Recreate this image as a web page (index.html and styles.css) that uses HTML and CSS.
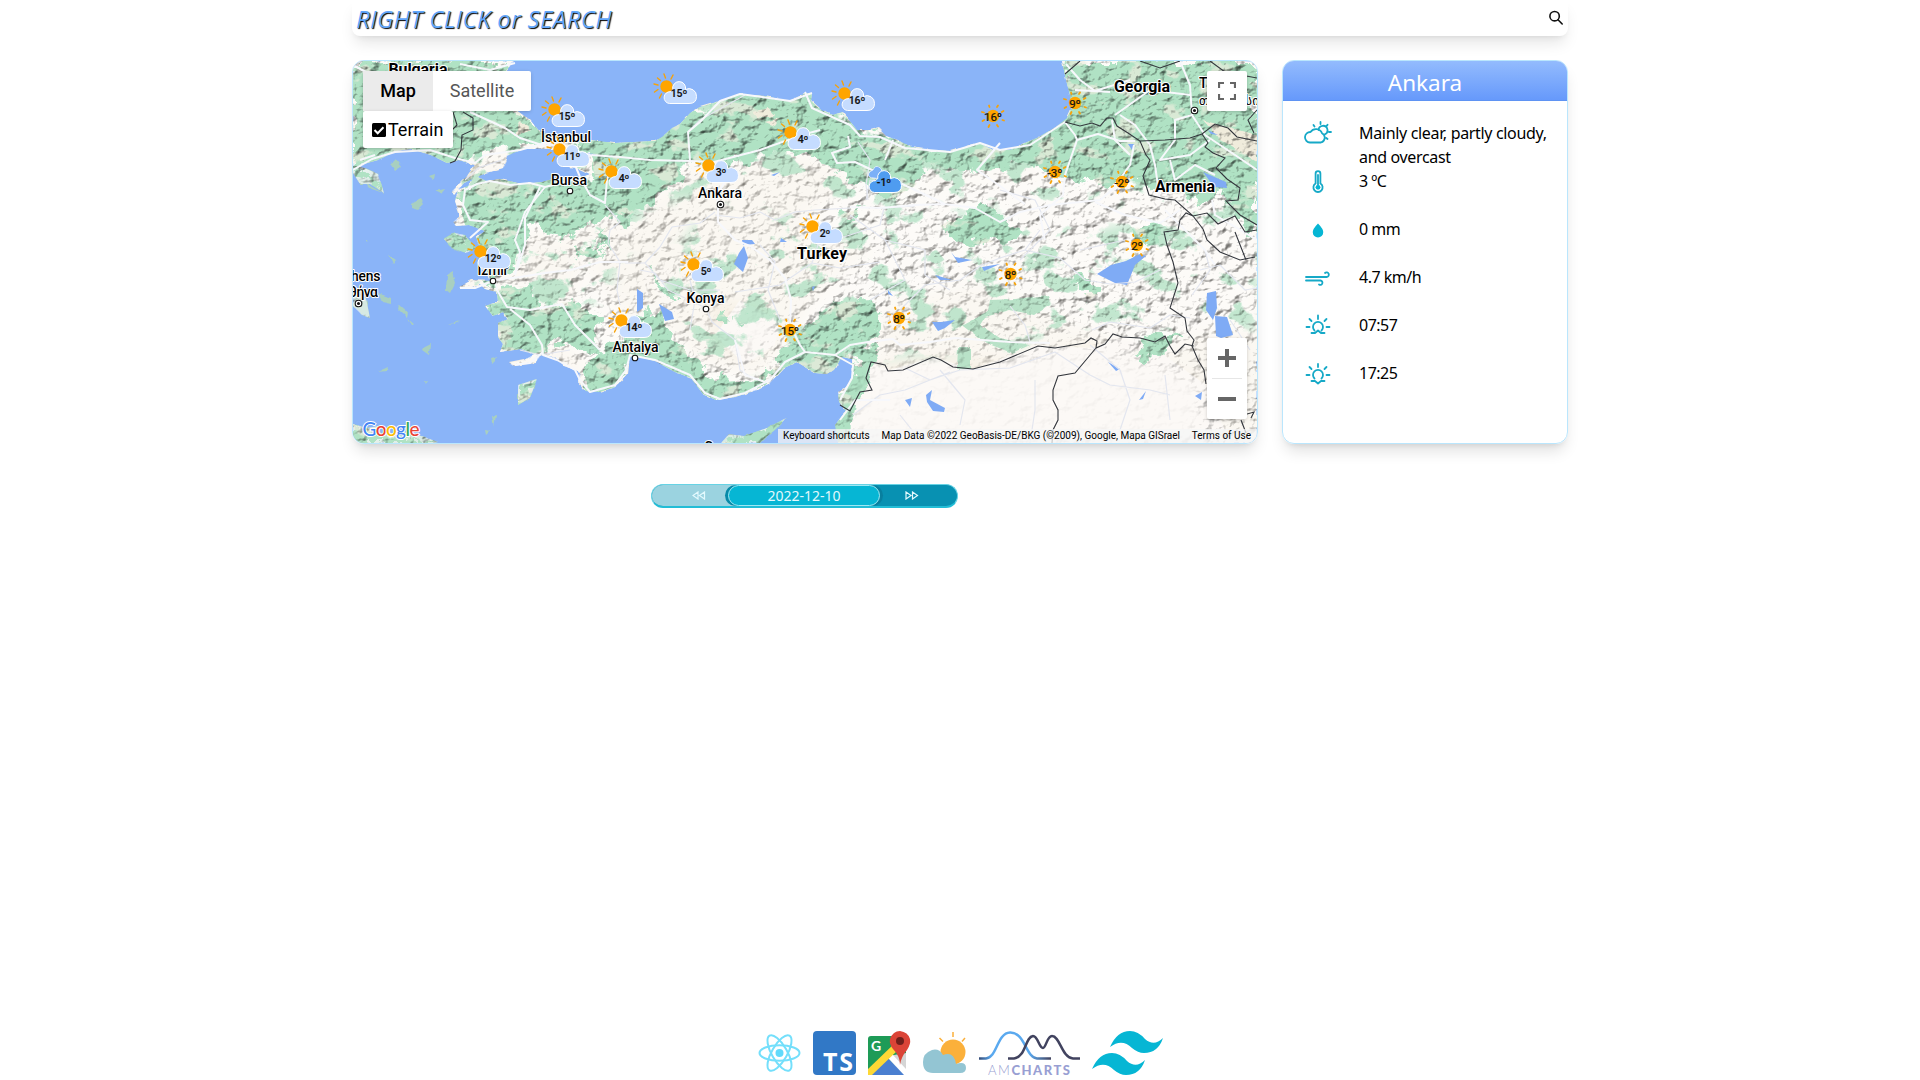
FILE: index.html
```html
<!DOCTYPE html>
<html lang="en">
<head>
<meta charset="utf-8">
<title>Weather Map</title>
<link rel="stylesheet" href="styles.css">
</head>
<body>
<header class="topbar">
  <span class="topbar-title">RIGHT CLICK or SEARCH</span>
  <svg class="search" viewBox="0 0 16 16"><circle cx="6.6" cy="6.2" r="4.7"/><path d="M10 9.800l4.200 4.200"/></svg>
</header>
<main class="content">
  <section class="map">
    <svg class="map-canvas" viewBox="353 61 904 382">
      <defs>
        <filter id="relief" x="0" y="0" width="100%" height="100%" color-interpolation-filters="sRGB">
          <feTurbulence type="fractalNoise" baseFrequency="0.08 0.1" numOctaves="4" seed="8" result="n"/>
          <feColorMatrix in="n" type="matrix" values="0 0 0 0 0  0 0 0 0 0  0 0 0 0 0  1 0 0 0 0"/>
          <feDiffuseLighting surfaceScale="3.600" diffuseConstant="1.360" lighting-color="#fff"><feDistantLight azimuth="225" elevation="52"/></feDiffuseLighting>
        </filter>
        <filter id="woods" x="0" y="0" width="100%" height="100%" color-interpolation-filters="sRGB">
          <feTurbulence type="fractalNoise" baseFrequency="0.03 0.04" numOctaves="5" seed="21"/>
          <feColorMatrix type="matrix" values="0 0 0 0 .67  0 0 0 0 .87  0 0 0 0 .75  0 14 0 0 -8"/>
        </filter>
        <filter id="bare" x="0" y="0" width="100%" height="100%" color-interpolation-filters="sRGB">
          <feTurbulence type="fractalNoise" baseFrequency="0.035 0.05" numOctaves="4" seed="14"/>
          <feColorMatrix type="matrix" values="0 0 0 0 .93  0 0 0 0 .93  0 0 0 0 .87  0 12 0 0 -7.100"/>
        </filter>
        <filter id="rough" x="-5%" y="-5%" width="110%" height="110%">
          <feTurbulence type="fractalNoise" baseFrequency="0.07" numOctaves="4" seed="3"/>
          <feDisplacementMap in="SourceGraphic" scale="24" xChannelSelector="R" yChannelSelector="G"/>
        </filter>
        <filter id="coast"><feTurbulence type="fractalNoise" baseFrequency="0.12" numOctaves="2" seed="5"/><feDisplacementMap in="SourceGraphic" scale="4" xChannelSelector="R" yChannelSelector="G"/></filter>
        <filter id="soft"><feGaussianBlur stdDeviation="7"/></filter>
        <path id="land" d="M353 61H514L505 72 503 92 513 108 530 120 540 132 556 136 572 136 590 140 615 143 634 142 655 141 662 137 672 128 680 124 690 113 700 107 720 101 740 94 765 96 788 101 800 97 805 93 812 93 811 101 821 110 833 115 842 112 848 119 857 130 870 130 878 128 886 136 897 140 912 147 930 150 950 151 965 147 980 143 993 150 1010 150 1025 143 1039 137 1056 127 1067 118 1072 107 1070 95 1066 80 1062 61H1257V443H838L835 425 846 411 839 402 838 392 846 388 853 378 852 359 842 357 834 370 827 374 815 373 797 362 784 368 770 383 757 390 735 397 716 400 703 394 691 378 675 372 655 361 640 357 629 357 627 374 615 387 600 392 586 391 578 382 580 372 564 366 555 357 541 355 535 363 513 366 509 363 524 360 535 354 521 349 500 352 503 344 498 337 498 323 508 319 503 312 493 316 485 306 498 302 497 292 485 289 480 284 465 289 459 287 472 280 491 281 488 273 478 264 481 250 476 238 485 231 469 225 456 226 453 222 460 216 455 201 458 190 468 186 475 176 487 181 500 179 522 184 542 182 560 177 580 179 590 174 577 168 560 166 570 159 600 154 573 153 560 149 541 149 523 149 507 156 503 168 486 173 464 183 454 195 452 191 467 176 475 165 459 160 447 163 431 155 411 149 396 151 378 160 353 167Z"/>
        <g id="islands">
          <path d="M353 286L364 291 367 303 370 318 362 315 353 306ZM518 385L537 379 530 398 518 405ZM353 424L367 428 378 426 381 434 404 432 425 437 438 442 434 443H353ZM721 443L729 434 744 436 767 428 786 418 776 429 765 438 760 443ZM411 204L421 199 424 204 418 210 411 208ZM444 239L454 233 465 235 476 248 466 253 452 248ZM447 275L452 272 455 283 450 293 446 290ZM391 165L396 160 401 167 395 171ZM435 191L445 189 441 194ZM429 176L435 174 434 180ZM389 255L396 260 393 264ZM399 305L408 313 407 318 398 309ZM378 293L391 298 391 304 382 302ZM424 346L430 343 429 355 422 350ZM448 325L460 320 455 324ZM491 358L499 356 492 363ZM378 371L389 366 388 370ZM492 416L496 415 494 428ZM485 430L490 431 486 435ZM365 183L383 193 369 188ZM353 163L378 174 384 193 370 184 360 184 353 173ZM408 319L415 325 412 325ZM425 381L428 382 426 385ZM363 277L368 278 367 282ZM366 239L368 242 366 241Z"/>
        </g>
        <clipPath id="landclip"><use href="#land"/><path d="M353 286L364 291 367 303 370 318 362 315 353 306ZM518 385L537 379 530 398 518 405ZM353 424L367 428 378 426 381 434 404 432 425 437 438 442 434 443H353ZM721 443L729 434 744 436 767 428 786 418 776 429 765 438 760 443ZM444 239L454 233 465 235 476 248 466 253 452 248ZM353 163L378 174 384 193 370 184 360 184 353 173Z"/></clipPath>
        <g id="greens">
          <path d="M353 61H510L490 100 530 115 552 140 535 143 505 148 450 165 353 170Z"/>
          <path d="M558 134L640 140 680 122 735 94 812 92 860 128 930 150 980 143 1062 120 1066 61H1257V235L1240 222 1222 190 1200 205 1180 195 1150 192 1140 175 1100 185 1065 178 1030 163 980 172 930 166 915 186 890 200 860 182 830 163 800 152 760 155 725 167 690 160 680 177 650 200 630 215 600 204 590 150Z"/>
          <path d="M455 195L490 178 585 178 640 190 620 214 585 225 560 240 530 225 515 270 485 285 470 225Z"/>
          <path d="M488 290L530 285 540 310 570 300 600 320 590 345 610 365 585 350 550 340 540 358 500 352Z"/>
          <path d="M580 370L610 345 640 325 650 300 663 330 682 345 690 360 720 378 765 376 795 340 835 303 870 300 880 312 868 345 850 352 852 378 835 405 848 443H836L852 358 828 376 790 362 750 396 710 402 650 365 625 360 616 388 590 394Z"/>
          <path d="M858 347L880 345 868 370 867 390 855 405 846 443H835V395L853 380Z"/>
          <path d="M605 234L608 225 597 240 610 254ZM575 247L598 243 602 258 582 255ZM619 212L632 217 625 230 615 220ZM650 272L660 280 677 292 680 303 663 292ZM840 215L870 205 845 225ZM940 226L975 205 1010 220 1020 238 965 246ZM1133 228L1160 222 1166 240 1145 248ZM1070 275L1086 280 1100 292 1090 300 1078 288ZM1144 338L1180 335 1164 350 1143 359 1132 354ZM716 316L725 314 724 324 714 324ZM732 315L748 318 740 323Z"/>
          <path d="M353 424L381 434 438 442V443H353ZM518 385L537 379 530 398 518 405ZM721 443L744 436 786 418 770 443ZM444 239L476 235V253H444ZM353 163L384 193 353 173Z"/>
        </g>
        <path id="lowland" d="M960 327L988 312 990 300 1015 299 1048 295 1050 305 1035 315 1010 310 985 317 980 325 1000 338 1030 345 1012 353 986 343 960 323ZM958 347L971 347 971 369 957 369ZM797 362L834 357 850 358 830 375 812 375Z"/>
        <mask id="mountains" maskUnits="userSpaceOnUse" x="353" y="61" width="904" height="382">
          <rect x="353" y="61" width="904" height="382" fill="#888"/>
          <g filter="url(#soft)" fill="#ddd"><path d="M850 185L1257 160V330L1200 335 1130 345 1060 320 980 285 900 300 840 340 770 370 820 290 870 250 800 220ZM570 350L580 260 640 330 690 360 760 380 620 390Z" fill="#bbb"/><use href="#greens"/></g>
          <path d="M853 372L935 357 1000 363 1090 345 1110 355 1200 380V443H853ZM710 300L770 310 770 340 740 360 715 340Z" fill="#111" filter="url(#soft)"/>
        </mask>
        <mask id="wooded" maskUnits="userSpaceOnUse" x="353" y="61" width="904" height="382">
          <path d="M353 61H1257V330L1100 330 950 350 840 360 700 370 660 280 700 220 900 205 1100 230 1200 205 650 200 600 300 450 350Z" fill="#bbb" filter="url(#soft)"/>
        </mask>
        <mask id="thin" maskUnits="userSpaceOnUse" x="353" y="61" width="904" height="382"><g fill="#aaa"><use href="#greens"/></g></mask>
        <symbol id="partly" overflow="visible"><g transform="translate(-12.500 -6.500)"><path class="ray" d="M-1-8.500L-2.500-12.500M4.500-7.500L6.500-11.500M-6-6L-9-8.500M-8.500-1.500L-12.500-2.500M-8.500 3L-12 5.500M-5 7.500L-7 11.500"/><circle class="sun" r="6.200"/></g>
          <path class="cloud" d="M-9.500 10.500A5.900 5.900 0 0 1-8.500-1.300Q-7.500-2.500-6.200-3.500A6.500 6.500 0 1 1 6.500-3.500 7.500 7.500 0 0 1 17.500 3.500Q17.500 10.500 10 10.500Z"/></symbol>
        <symbol id="cloudy" overflow="visible"><path class="cloud-back" d="M-10-4Q-16-4-15.500-8-14.500-11-11-12-9-17-5-15-2-14-2-9L-3-3Z"/><path class="cloud-front" d="M-9.500 10.500A5.900 5.900 0 0 1-8.500-1.300Q-7.500-2.500-6.200-3.500A6.500 6.500 0 1 1 6.500-3.500 7.500 7.500 0 0 1 17.500 3.500Q17.500 10.500 10 10.500Z"/></symbol>
        <symbol id="clear" overflow="visible"><circle class="sun" r="6.200"/><path class="ray dots" d="M-3.500-9L-4-10.500M4-9L5-10.500M8.800-4L10.500-5M9.500 4L11 4.500M4 9L5 10.500M-3.500 9L-4.500 11M-8.800 4L-10.500 5M-9-3.500L-11-4"/></symbol>
      </defs>
      <rect class="sea" x="353" y="61" width="904" height="382"/>
      <g class="land" filter="url(#coast)"><use href="#land"/></g>
      <use class="isle" href="#islands" filter="url(#coast)"/>
      <g clip-path="url(#landclip)">
        <path class="plain" d="M853 372L871 362 890 370 933 357 973 369 1038 346 1096 348 1113 338 1150 345 1206 385 1230 443H845ZM740 300L780 320 775 345 745 365 715 335Z"/>
        <g mask="url(#wooded)"><rect x="353" y="61" width="904" height="382" filter="url(#woods)"/></g>
        <g class="green" filter="url(#rough)"><use href="#greens"/></g>
        <use class="lowland" href="#lowland" filter="url(#coast)"/>
        <g mask="url(#thin)"><rect x="353" y="61" width="904" height="382" filter="url(#bare)"/></g>
        <path class="patch" d="M520 120L532 130 515 136ZM752 112L768 108 775 116 757 118ZM765 122L780 118 775 126ZM455 165L480 163 470 180ZM1203 120L1257 135V162L1220 140Z" filter="url(#coast)"/>
        <rect class="shade" x="353" y="61" width="904" height="382" filter="url(#relief)" mask="url(#mountains)"/>
      </g>
      <g class="water">
        <path d="M739 253L744 246 748 258 743 272 734 264ZM742 240L752 240 755 244 743 245ZM637 289L643 293 643 308 637 312ZM659 304L672 312 674 319 665 321ZM1097 274L1111 265 1126 261 1140 254 1146 256 1135 265 1127 285 1115 283ZM1207 293L1216 291 1217 308 1213 320 1206 310ZM1215 316L1227 317 1233 335 1221 338 1216 336ZM1203 172L1226 182 1227 188 1214 187ZM926 395L932 390 930 400 945 408 944 412 933 411 927 402ZM905 400L912 398 910 407ZM951 252L955 257 972 260 958 263ZM932 322L941 322 955 320 945 328 938 331ZM982 267L1000 264 984 271ZM935 275L952 280 940 280ZM1108 362L1120 369 1116 371ZM1195 396L1202 392 1201 400ZM1139 400L1146 391 1143 399ZM771 175L780 172 774 176ZM888 290L893 296 888 294ZM1128 144L1134 144 1132 150ZM781 238L787 242 780 242ZM815 286L813 291 812 287ZM1208 130L1218 135 1211 134Z"/>
      </g>
      <g class="road minor">
        <path d="M605 205L620 222 610 230 608 243 620 262 617 290 620 305M625 263L645 263 660 247 672 227 700 223 715 212M715 215L740 218 760 212 775 220 795 212 815 210 850 208M645 263L660 280 690 290 720 290M640 270L655 273 668 290 706 308 712 322 735 340 740 370 752 378M735 292L780 285 812 263 840 268 880 262M760 245L775 262 768 290 780 320M850 215L885 240 895 260 905 280 870 300M812 263L818 245 850 235 880 225 884 208 915 206M885 240L905 245 925 250 925 275 950 290M858 142L870 160 866 185 868 200M884 182L870 180 866 200M1040 230L1025 250 1000 258 980 266 960 280 925 285 900 310M1025 250L1060 258 1085 280 1110 284 1135 282 1160 270M1010 306L1025 325 1030 342M940 370L965 400 960 425M905 368L930 380 960 370 1010 368 1055 352 1090 375 1110 385 1150 390 1170 395M1035 380L1035 410 1030 443M853 415L880 395 905 390 950 372M1090 345L1120 370 1130 400 1120 430M1165 375L1170 420M1200 270L1220 265 1245 290 1257 288M1192 295L1210 270 1205 250M1230 320L1250 350M520 350L540 355 570 350"/>
        <path d="M502 160L478 168 465 180M745 95L700 120 688 132M1137 245L1125 240 1080 250M1092 330L1110 322 1150 328 1170 315 1190 318M1000 190L1035 200 1050 230 1020 260M690 280L695 300 690 330M900 415L920 440 950 430"/>
      </g>
      <g class="road">
        <path d="M353 170L372 159 395 152 430 150 455 158 475 163 485 155 520 150 545 143 560 147 590 155 620 157 650 160 690 161 714 162 730 173 717 195 718 205 718 222 735 240 750 246 770 260 785 278 791 300 790 325 800 345 805 352 835 355 850 345 868 342 893 339 900 345 930 342 955 338 1010 342 1050 343"/>
        <path d="M460 64L490 70 515 63M353 65L375 77M375 155L360 160M470 112L505 128 520 138 545 146M575 165L580 177 590 195 605 203 607 180 610 170M545 187L530 183 510 185 490 181 477 184 465 190 463 205 470 220 488 222 470 238M545 187L525 212 515 240 520 252 515 275M580 178L545 187M540 187L525 218 525 245 517 270"/>
        <path d="M460 288L475 288 495 280 520 277 545 273 570 270 600 262 628 262M495 280L497 290 507 307 530 310 562 304 575 325 600 350M510 309L530 325 542 345 543 355 557 360 575 370 580 380 590 392 615 385 626 370 630 355 655 360 690 375 705 393 720 399 745 393 770 380 785 362 805 352M543 352L530 363 515 365"/>
        <path d="M735 340L745 375 765 382M690 161L688 132 700 122 720 101 740 94 790 101 812 93M714 162L760 150 802 135 820 130M805 92L812 108 850 125 860 136 880 137 905 148 950 152 980 143 1000 150 1030 145 1065 122 1075 135 1077 140 1098 134 1120 141 1135 141M848 136L850 147 832 153 837 163 855 162 900 183 945 204 975 208 1000 222 1020 212 1050 205 1100 200 1112 190 1130 165 1134 145M850 207L880 208 915 205 945 204M1077 140L1065 175 1063 195 1040 215 1045 240M1000 143L977 170 1000 186 1025 204M1095 202L1125 215 1160 223 1180 210M893 140L885 160"/>
        <path d="M1066 64L1080 80 1095 91 1130 80M1075 90L1110 92M1180 61L1190 85 1192 115 1205 135M1190 95L1150 90 1115 115M1120 115L1135 125 1150 145 1155 165 1160 200M1112 120L1115 140 1130 155M1192 115L1175 120 1175 140 1160 160 1190 155 1210 140M1205 135L1235 155 1257 170M1170 160L1175 180 1195 165 1215 175M1212 200L1215 215 1257 240M1165 210L1205 250 1215 265M835 355L853 365 852 378 840 400M840 420L855 400 890 400"/>
      </g>
      <g class="border"><path d="M463 112L473 118 473 130 462 135 461 150 455 161 450 163M453 112L457 125 450 132M1065 122L1080 126 1092 123 1100 126 1107 118 1113 118 1117 126 1128 133 1140 141 1146 155 1150 160 1143 176 1149 195 1165 199 1175 200 1193 216 1207 213 1218 224 1235 216 1245 232 1257 230M1140 141L1165 140 1190 138 1202 134 1215 124 1228 128 1237 137 1257 141M1202 134L1208 143 1205 147 1213 153 1225 158 1216 168 1227 179 1240 188 1238 200 1226 201 1240 215 1257 225M1193 216L1203 229 1207 240 1220 252 1240 260 1255 257M1193 216L1186 213 1180 220 1178 230 1164 232 1167 245 1173 262 1178 283 1170 308 1185 318 1187 331 1194 340 1192 346 1198 360 1204 370 1206 384M1235 232L1246 260M840 405L850 411 860 392 872 390 866 378 871 362 885 365 888 371 903 370 933 357 941 360 953 367 973 369 1000 362 1038 346 1055 348 1085 343 1091 338 1097 341 1096 348 1105 344 1113 334 1122 337 1140 338 1155 342 1165 336 1170 346 1175 354 1185 344 1194 346M1096 348L1075 373 1058 376 1053 390 1053 400 1058 410 1058 420 1053 430 1052 443M1065 74L1080 61M1140 61L1160 68 1180 61M1240 416L1254 412 1251 418M1241 420L1246 433M1257 110L1248 120 1254 133M1210 61L1225 72 1257 78"/></g>
      <g class="labels">
        <g class="country"><text x="418" y="74.500" textLength="59">Bulgaria</text><text x="822" y="258.500" textLength="50">Turkey</text><text x="1142" y="91.500" textLength="56">Georgia</text><text x="1185" y="191.500" textLength="60">Armenia</text></g>
        <text x="566" y="142" textLength="50">İstanbul</text><text x="569" y="185" textLength="36">Bursa</text><text x="720" y="198" textLength="44">Ankara</text><text x="705.500" y="303" textLength="38">Konya</text><text x="635.500" y="352" textLength="46">Antalya</text><text x="493" y="275" textLength="31">İzmir</text><text x="359" y="281" textLength="43">Athens</text><text x="359" y="297" textLength="38">Αθήνα</text><text x="1219" y="88" textLength="40">Tbilisi</text><text class="geo" x="1229" y="105" textLength="60">თბილისი</text><text x="726" y="452">Cyprus</text>
      </g>
      <g class="dots"><circle cx="570" cy="191" r="2.800"/><circle cx="720.500" cy="204.500" r="3.300"/><circle class="core" cx="720.500" cy="204.500" r="1.500"/><circle cx="706" cy="309" r="2.800"/><circle cx="635" cy="358" r="2.800"/><circle cx="493" cy="281" r="2.800"/><circle cx="358.500" cy="303.500" r="3.300"/><circle class="core" cx="358.500" cy="303.500" r="1.500"/><circle cx="1194.500" cy="110.500" r="3.300"/><circle class="core" cx="1194.500" cy="110.500" r="1.500"/></g>
      <g class="markers">
        <g transform="translate(567 116)"><use href="#partly"/><text y="4">15º</text></g>
        <g transform="translate(679 93)"><use href="#partly"/><text y="4">15º</text></g>
        <g transform="translate(857 100)"><use href="#partly"/><text y="4">16º</text></g>
        <g transform="translate(572 156)"><use href="#partly"/><text y="4">11º</text></g>
        <g transform="translate(624 178)"><use href="#partly"/><text y="4">4º</text></g>
        <g transform="translate(721 172)"><use href="#partly"/><text y="4">3º</text></g>
        <g transform="translate(803 139)"><use href="#partly"/><text y="4">4º</text></g>
        <g transform="translate(825 233)"><use href="#partly"/><text y="4">2º</text></g>
        <g transform="translate(493 258)"><use href="#partly"/><text y="4">12º</text></g>
        <g transform="translate(706 271)"><use href="#partly"/><text y="4">5º</text></g>
        <g transform="translate(634 327)"><use href="#partly"/><text y="4">14º</text></g>
        <g transform="translate(884 182)"><use href="#cloudy"/><text y="4">-1º</text></g>
        <g class="warm" transform="translate(790 330)"><use href="#clear"/><text y="4.500">15º</text></g>
        <g class="warm" transform="translate(899 318)"><use href="#clear"/><text y="4.500">8º</text></g>
        <g class="warm" transform="translate(1010.500 274)"><use href="#clear"/><text y="4.500">8º</text></g>
        <g class="warm" transform="translate(1137 245)"><use href="#clear"/><text y="4.500">2º</text></g>
        <g class="warm" transform="translate(1122 182)"><use href="#clear"/><text y="4.500">-2º</text></g>
        <g class="warm" transform="translate(1055 172)"><use href="#clear"/><text y="4.500">-3º</text></g>
        <g class="warm" transform="translate(1075 103)"><use href="#clear"/><text y="4.500">9º</text></g>
        <g class="warm" transform="translate(993 116)"><use href="#clear"/><text y="4.500">16º</text></g>
      </g>
      <text class="google" x="362.500" y="435.500" textLength="57"><tspan fill="#4285f4">G</tspan><tspan fill="#ea4335">o</tspan><tspan fill="#fbbc05">o</tspan><tspan fill="#4285f4">g</tspan><tspan fill="#34a853">l</tspan><tspan fill="#ea4335">e</tspan></text>
    </svg>
    <div class="map-type"><span class="type-btn active">Map</span><span class="type-btn sat">Satellite</span></div>
    <div class="terrain"><svg viewBox="0 0 14 14"><rect width="14" height="14" rx="1.500"/><path d="M2.500 7L5.700 10.200 11.500 4.200"/></svg>Terrain</div>
    <div class="fullscreen"><svg viewBox="0 0 18 18"><path d="M1 6V1H6M12 1H17V6M17 12V17H12M6 17H1V12"/></svg></div>
    <div class="zoom"><span class="zoom-btn"><svg viewBox="0 0 18 18"><path d="M0 9H18M9 0V18"/></svg></span><span class="zoom-btn"><svg viewBox="0 0 18 18"><path d="M0 9H18"/></svg></span></div>
    <div class="attribution"><span>Keyboard shortcuts</span><span>Map Data ©2022 GeoBasis-DE/BKG (©2009), Google, Mapa GISrael</span><span>Terms of Use</span></div>
  </section>
  <aside class="card">
    <h2 class="card-title">Ankara</h2>
    <ul class="facts">
      <li><svg viewBox="0 0 28 24"><path d="M6 21.500H17A5 5 0 0 0 18 12.200 6.500 6.500 0 0 0 6.500 11 5.200 5.200 0 0 0 6 21.500ZM14.500 9A4.500 4.500 0 1 1 20.500 13.500M16.500 1V3M9.500 4L10.500 5.500M23.500 3.800L22 5.600M25 11H27M23.500 18L22.300 17"/></svg><span class="wide">Mainly clear, partly cloudy, and overcast</span></li>
      <li><svg viewBox="0 0 28 24"><path d="M11.600 14.500V4.500A2.400 2.400 0 0 1 16.400 4.500V14.500A4.600 4.600 0 1 1 11.600 14.500Z"/><path d="M14 6V16"/><circle class="full" cx="14" cy="18.300" r="2.400"/></svg><span>3 ºC</span></li>
      <li><svg viewBox="0 0 28 24"><path class="full" d="M14 6.500Q19.500 12 19.200 15.500A5.200 5 0 0 1 8.800 15.500Q8.500 12 14 6.500Z"/></svg><span>0 mm</span></li>
      <li><svg viewBox="0 0 28 24"><path d="M2 12H22.500A2.300 2.300 0 1 0 21 8M2 15.500H16.500A2.200 2.200 0 1 1 15 19.500"/></svg><span>4.7 km/h</span></li>
      <li><svg viewBox="0 0 28 24"><path d="M10.500 17.500A5 5 0 1 1 17.500 17.500M14 2.500V6M2.500 14H5.500M22.500 14H25.500M5.500 6L7.500 8M22.500 6L20.500 8M7.500 20H11L14 17.500 17 20H20.500"/></svg><span>07:57</span></li>
      <li><svg viewBox="0 0 28 24"><path d="M10.500 17.500A5 5 0 1 1 17.500 17.500M14 3V6M2.500 14H5.500M22.500 14H25.500M5.500 6L7.500 8M22.500 6L20.500 8M7.500 20H11L14 22.500 17 20H20.500"/></svg><span>17:25</span></li>
    </ul>
  </aside>
</main>
<nav class="dates">
  <span class="step prev"><svg viewBox="0 0 14 9"><path d="M6 1L1 4.500 6 8ZM12.500 1L7.500 4.500 12.500 8Z"/></svg></span>
  <span class="today">2022-12-10</span>
  <span class="step next"><svg viewBox="0 0 14 9"><path d="M1 1L6 4.500 1 8ZM7.500 1L12.500 4.500 7.500 8Z"/></svg></span>
</nav>
<footer class="tech">
  <svg width="43" height="44" viewBox="0 0 43 44"><g class="react"><ellipse cx="21.500" cy="22" rx="20" ry="7.700"/><ellipse cx="21.500" cy="22" rx="20" ry="7.700" transform="rotate(60 21.500 22)"/><ellipse cx="21.500" cy="22" rx="20" ry="7.700" transform="rotate(120 21.500 22)"/></g><circle cx="21.500" cy="22" r="4" fill="#61dafb"/></svg>
  <svg width="43" height="44" viewBox="0 0 43 44"><rect width="43" height="44" rx="4" fill="#3178c6"/><text class="ts" x="10" y="39.500" textLength="30">TS</text></svg>
  <svg width="43" height="44" viewBox="0 0 43 44"><rect x="0" y="5" width="38" height="39" rx="3" fill="#1e9b57"/><path d="M3 44L20 27 37 44Z" fill="#4a7fd0"/><path d="M38 22V42L20 25Z" fill="#d5d5d5"/><path d="M20 27L24 23 38 38V44H36Z" fill="#fff"/><path d="M0 38L27 12 29 20 4 44H0Z" fill="#fdd835"/><path d="M32 34Q32 25 25 18 21 13 22 8 25 0 32 0 40 1 42 8 43 13 39 19 33 26 32 34Z" fill="#db4437"/><circle cx="32" cy="10" r="4" fill="#701f1b"/><text class="mapg" x="3" y="20">G</text></svg>
  <svg width="44" height="44" viewBox="0 0 44 44"><circle cx="30" cy="21" r="12.500" fill="#fbb03b"/><path d="M30 1V6M16.500 7L20 10.500M42 7L39 10.500" stroke="#fbb03b" stroke-width="1.500"/><path d="M10 42Q0 42 0 31 0 22 9 19 16 17 20 24 31 20 33 33 43 30 43 37 43 42 37 42Z" fill="#93c5d3"/></svg>
  <svg width="101" height="44" viewBox="0 0 101 44"><defs><linearGradient id="amline" gradientUnits="userSpaceOnUse" x1="0" y1="0" x2="101" y2="0"><stop stop-color="#344b77"/><stop offset=".12" stop-color="#5aa9ef"/><stop offset=".5" stop-color="#5aa9ef"/><stop offset=".7" stop-color="#444765"/></linearGradient></defs><g fill="none" stroke-width="2.500"><path d="M0 27.500H7C18 27 18 2 31 1.500 46 1 47 27 58 27.500H72" stroke="url(#amline)"/><path d="M29 27.500H35C47 26 46 6 54 5 59 5 60 17 64 17 67 17 68 5 73 5 81 5 83 27 94 27.500H101" stroke="#41435f"/></g><text class="am" x="9" y="43.500" textLength="82">AM<tspan>CHARTS</tspan></text></svg>
  <svg width="72" height="44" viewBox="0 0 72 44"><g fill="#06b6d4"><path d="M18 16Q25 0 38 0 46 0 53 8 62 16 71 7 66 22 52 22 46 22 40 17 30 7 18 16Z"/><path d="M0 38Q7 22 20 22 28 22 35 30 44 38 53 29 48 44 34 44 28 44 22 39 12 29 0 38Z"/></g></svg>
</footer>
</body>
</html>
```
FILE: styles.css
```css
* { box-sizing: border-box; }
body {
  margin: 0;
  height: 1080px;
  overflow: hidden;
  display: flex;
  flex-direction: column;
  align-items: center;
  background: #fff;
  color: #000;
  font-family: "Noto Sans", "Open Sans", sans-serif;
}
.topbar {
  width: 1216px;
  height: 36px;
  padding: 0 4px;
  display: flex;
  align-items: center;
  justify-content: space-between;
  border-radius: 0 0 8px 8px;
  box-shadow: 0 10px 15px -3px rgba(0,0,0,.1), 0 4px 6px -4px rgba(0,0,0,.1);
}
.topbar-title {
  font: italic 400 24px/36px "Open Sans", sans-serif;
  letter-spacing: 0.36px;
  padding-top: 2px;
  color: #60a5fa;
  text-shadow: 1px 1px 1px #000;
}
.search { width: 16px; height: 16px; fill: none; stroke: #111; stroke-width: 1.6; stroke-linecap: round; }
.content {
  width: 1216px;
  margin-top: 24px;
  display: grid;
  grid-template-columns: 906px 286px;
  column-gap: 24px;
  height: 384px;
}
.map, .card {
  border: 1px solid #bae6fd;
  border-radius: 12px;
  overflow: hidden;
  box-shadow: 0 10px 15px -3px rgba(0,0,0,.12), 0 4px 6px -4px rgba(0,0,0,.12);
}
.map { position: relative; font-family: Roboto, sans-serif; }
.map-canvas { display: block; width: 904px; height: 382px; }
.sea { fill: #8ab4f8; }
.land { fill: #f7f0e4; }
.isle { fill: #a8cfc0; }
.plain { fill: #fcf9f6; }
.green { fill: #b0e2c4; }
.lowland { fill: #b9e2c8; }
.patch { fill: #f0ecdc; }
.shade { mix-blend-mode: multiply; }
.water { fill: #7fabf5; }
.road { fill: none; stroke: #f7f8fc; stroke-width: 2; stroke-linejoin: round; }
.road.minor { stroke: #e3e6ef; stroke-width: 1.2; }
.border { fill: none; stroke: #34373d; stroke-width: 1.1; }
.labels { font-size: 14px; font-weight: 500; text-anchor: middle; fill: #000; stroke: #fff; stroke-width: 2px; paint-order: stroke; stroke-linejoin: round; }
.labels .country { font-size: 16px; font-weight: 700; }
.labels .geo { font-family: "DejaVu Sans", sans-serif; font-size: 13px; font-weight: 400; }
.dots { fill: #fff; stroke: #111; stroke-width: 1.1; }
.dots .core { fill: #111; stroke: none; }
.sun { fill: #ffa500; }
.ray { fill: none; stroke: #f5a20b; stroke-width: 1.4; stroke-linecap: round; }
.ray.dots { stroke-width: 1.8; }
.cloud { fill: #c5dcff; stroke: #fff; stroke-width: 1; }
.cloud-back { fill: #7bb0f7; stroke: #e8f1ff; stroke-width: .8; }
.cloud-front { fill: #4f9cf0; stroke: #fff; stroke-width: 1; }
.markers text { font-size: 10.500px; font-weight: 500; text-anchor: middle; fill: #111; stroke: #111; stroke-width: .2px; }
.markers .warm text { font-size: 11.500px; font-weight: 400; }
.google { font: 500 19px "Lato", sans-serif; stroke: #fff; stroke-width: 2px; paint-order: stroke; }
.map-type, .terrain, .fullscreen, .zoom { position: absolute; background: #fff; border-radius: 2px; box-shadow: 0 1px 4px -1px rgba(0,0,0,.3); }
.map-type { left: 10px; top: 10px; display: flex; font-size: 18px; line-height: 40px; text-align: center; }
.type-btn { width: 98px; color: #565656; }
.type-btn.active { width: 70px; background: #ebebeb; color: #000; font-weight: 500; }
.terrain { left: 10px; top: 50px; width: 90px; height: 37px; padding-left: 9px; display: flex; align-items: center; gap: 2px; font-size: 18px; }
.terrain svg { width: 14px; height: 14px; }
.terrain path { fill: none; stroke: #fff; stroke-width: 2; }
.fullscreen { right: 10px; top: 10px; width: 40px; height: 40px; display: grid; place-items: center; }
.fullscreen svg, .zoom svg { width: 18px; height: 18px; fill: none; stroke: #666; }
.fullscreen svg { stroke-width: 2.200; }
.zoom { right: 10px; top: 277px; width: 40px; height: 81px; display: flex; flex-direction: column; align-items: center; }
.zoom-btn { flex: 1; width: 30px; display: grid; place-items: center; }
.zoom-btn + .zoom-btn { border-top: 1px solid #e6e6e6; }
.zoom svg { stroke-width: 4; }
.attribution { position: absolute; right: 0; bottom: 0; width: 479px; height: 14px; padding: 0 6px 0 5px; display: flex; justify-content: space-between; background: rgba(245,245,245,.75); font-size: 10px; line-height: 14px; white-space: nowrap; }
.card-title {
  margin: 0;
  height: 40px;
  font-size: 22.5px;
  line-height: 43px;
  font-weight: 400;
  text-align: center;
  color: #fff;
  background: linear-gradient(#93bbfd, #6699fb);
  border-bottom: 1px solid #5f93f3;
}
.facts { list-style: none; margin: 0; padding: 20px 0 0 21px; font: 16px/24px "Noto Sans", sans-serif; }
.facts li { height: 48px; display: flex; gap: 27px; }
.facts svg { width: 28px; height: 24px; flex: none; fill: none; stroke: #16a9c7; stroke-width: 1.800; stroke-linecap: round; stroke-linejoin: round; }
.facts .full { fill: #06b6d4; stroke: none; }
.facts span { width: 206px; white-space: nowrap; letter-spacing: -.5px; }
.facts .wide { white-space: normal; letter-spacing: -.33px; }
.dates { width: 307px; height: 24px; margin: 40px 311px 0 0; display: flex; border-radius: 12px; background: #0891b2; border: 1px solid #67d3e5; border-bottom: 2px solid #22bdd6; font-size: 14px; color: #e3f9fd; overflow: hidden; }
.step { width: 77px; display: grid; place-items: center; }
.step svg { width: 14px; height: 9px; fill: none; stroke: #e3f9fd; stroke-width: 1.200; }
.prev { background: #9bd3e0; margin-right: -12px; padding-left: 6px; width: 88px; }
.today { width: 153px; border-radius: 11px; background: #06b6d4; border: 1.500px solid #9ee8f3; box-shadow: -3px 0 0 #078aa8, 3px 0 0 #087f9e; line-height: 19px; text-align: center; z-index: 1; }
.next { padding-right: 14px; }
.tech { margin-top: auto; margin-bottom: 5px; padding-left: 1px; display: flex; align-items: center; gap: 12px; }
.tech svg { display: block; }
.react { fill: none; stroke: #74dffb; stroke-width: 2; }
.ts { font: 700 25px "Open Sans", sans-serif; fill: #fff; }
.mapg { font: 700 14px Lato, sans-serif; fill: #fff; }
.am { font: 300 13px Lato, sans-serif; fill: #999fd3; }
.am tspan { font-weight: 900; }
```
